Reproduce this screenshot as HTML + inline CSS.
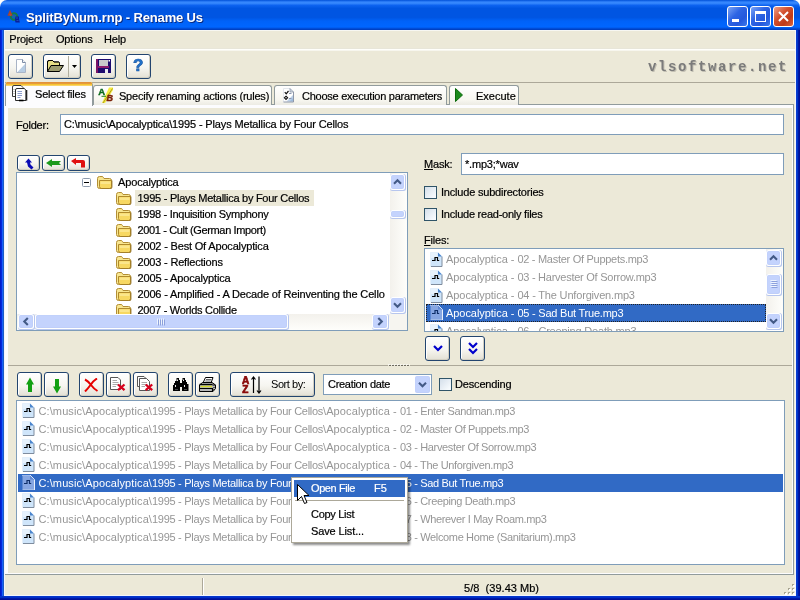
<!DOCTYPE html>
<html><head><meta charset="utf-8">
<style>
*{box-sizing:border-box;margin:0;padding:0}
html,body{width:800px;height:600px;overflow:hidden;background:#ECE9D8}
body{font-family:"Liberation Sans",sans-serif;font-size:11px;color:#000;position:relative;letter-spacing:-0.2px;will-change:transform}
.abs,.abs>div,.abs>span,.abs>svg{position:absolute}
#title{left:0;top:0;width:800px;height:30px;background:linear-gradient(to bottom,#0050D8 0%,#2F80FA 6%,#3A8CFF 10%,#0C62F0 18%,#0055E2 28%,#0055E2 58%,#0062F8 70%,#0066FF 90%,#0048D0 96%,#003AB8 100%);border-radius:7px 7px 0 0}
#title .t{left:26px;top:10px;color:#fff;font-weight:bold;font-size:13px;letter-spacing:-0.14px;text-shadow:1px 1px 0 #0A2A80;white-space:nowrap}
#bl{left:0;top:30px;width:4px;height:570px;background:linear-gradient(to right,#001CCB 0,#001CCB 1px,#0428DC 1px,#0428DC 2px,#1660F8 2px,#1660F8 3px,#1C5AC4 3px)}
#br{left:796px;top:30px;width:4px;height:570px;background:linear-gradient(to right,#0A3CD0 0,#0A3CD0 1px,#0038C8 1px,#0038C8 2px,#0018A8 2px,#0018A8 3px,#001098 3px)}
#bb{left:0;top:596px;width:800px;height:4px;background:linear-gradient(to bottom,#0A3CD0 0,#0030C8 1px,#0030C8 2px,#0018A8 2px,#0018A8 3px,#001098 3px)}
.wb{top:6px;width:21px;height:21px;border:1px solid #fff;border-radius:3px;background:linear-gradient(135deg,#7BA4F5 0%,#2E65E4 40%,#2458DC 70%,#3A78EC 100%)}
.wb.c{background:linear-gradient(135deg,#EDA088 0%,#D3502E 40%,#C03A18 70%,#D8663E 100%)}
#menu span{top:33px;font-size:11px;-webkit-text-stroke:0.2px}
.hl{height:1px;left:4px;width:792px}
.tb{border:1px solid #23456F;border-radius:3px;background:linear-gradient(to bottom,#FFFFFF 0%,#F6F5F0 55%,#E3E0D4 100%);box-shadow:inset -1px -1px 0 #D2CFC2, inset 1px 1px 0 #fff}
.tab{top:85px;height:20px;border:1px solid #919B9C;border-bottom:none;border-radius:3px 3px 0 0;background:linear-gradient(to bottom,#FFFFFF,#F7F6EF 75%,#ECEBE3);font-size:11px;white-space:nowrap}
.tab span{top:4px;-webkit-text-stroke:0.2px}
.inp{background:#fff;border:1px solid #7F9DB9;font-size:11px;white-space:nowrap;overflow:hidden;-webkit-text-stroke:0.2px}
.cb{width:13px;height:13px;border:1px solid #2F5468;background:linear-gradient(135deg,#D4DFEA,#F6FAFD 85%)}
.lbl{font-size:11px;white-space:nowrap;-webkit-text-stroke:0.2px}
.sbt{background:linear-gradient(to right,#F3F1EC,#FEFEFB)}
.sbt.h{background:linear-gradient(to bottom,#F3F1EC,#FEFEFB)}
.row{left:0;height:18px;white-space:nowrap;font-size:11px;color:#969696;line-height:18px;-webkit-text-stroke:0}
.row.t{color:#000;line-height:16px;height:16px;-webkit-text-stroke:0.2px}
.sel{background:#316AC5;color:#fff}
</style></head><body>

<!-- window frame -->
<div class="abs" style="left:0;top:0;width:800px;height:10px;background:#fff"></div>
<div id="title" class="abs"><div class="t">SplitByNum.rnp - Rename Us</div>
 <svg style="left:7px;top:9px" width="14" height="15" viewBox="0 0 14 15"><circle cx="7" cy="7.5" r="3.3" fill="none" stroke="#167A44" stroke-width="1.9"/><circle cx="7" cy="7.5" r="1.6" fill="#1E6A94"/><path d="M3 0.8L5.8 6.8H0.4Z" fill="#A8442A"/><path d="M2 4.5L4.5 6L3 7Z" fill="#B84848"/><path d="M8.5 7.5H12V10L12.8 13.5H8.5Q7.5 11 8.5 7.5Z" fill="#08209C"/><path d="M9 9H11M9.5 11.5H11.5" stroke="#1E50C0" stroke-width="0.9"/></svg>
 <div class="wb" style="left:727px"><div style="left:4px;top:12px;width:7px;height:3px;background:#fff;position:absolute"></div></div>
 <div class="wb" style="left:750px"><div style="left:4px;top:4px;width:11px;height:11px;border:1px solid #fff;border-top-width:3px;position:absolute"></div></div>
 <div class="wb c" style="left:773px"><svg style="left:4px;top:4px;position:absolute" width="11" height="11" viewBox="0 0 11 11"><path d="M1 1L10 10M10 1L1 10" stroke="#fff" stroke-width="2"/></svg></div>
</div>
<div class="abs" style="left:4px;top:30px;width:792px;height:1px;background:#F7F7F2"></div>
<div id="bl" class="abs"></div><div id="br" class="abs"></div><div id="bb" class="abs"></div>

<!-- menu -->
<div id="menu" class="abs"><span style="left:9.3px">Project</span><span style="left:56px">Options</span><span style="left:104px">Help</span></div>
<div class="abs hl" style="top:48px;background:#E8E6D9"></div><div class="abs hl" style="top:49px;background:#FFFFFB"></div><div class="abs hl" style="top:50px;background:#F7F6EE"></div>

<!-- toolbar -->
<div class="abs tb" style="left:8px;top:54px;width:25px;height:25px">
 <svg style="left:7px;top:4px" width="11" height="15" viewBox="0 0 11 15"><path d="M0.5 0.5H6.5L9.5 3.5V13.5H0.5Z" fill="#fff" stroke="#A9B4C6"/><path d="M9 5V13H1.5Z" fill="#B7CDE4"/><path d="M6.5 0.5V3.5H9.5" fill="#F2F5FA" stroke="#7D8CA6"/></svg>
</div>
<div class="abs tb" style="left:43px;top:54px;width:38px;height:25px">
 <div style="left:24px;top:1px;width:1px;height:21px;background:#B0AE9F"></div>
 <svg style="left:3px;top:5px" width="17" height="13" viewBox="0 0 17 13"><path d="M0.5 11.5V2Q0.5 0.5 2 0.5H5.5L7 2H11.5Q12.5 2 12.5 3.5V5" fill="#E6DE86" stroke="#000"/><path d="M0.5 11.5V1.5H6L7 2.5H12.5V6H4Z" fill="#E6DE86"/><path d="M0.5 11.5L4 5.5H16.5L12.5 11.5Z" fill="#9C9C70" stroke="#000"/><path d="M0.5 11.5V2Q0.5 0.5 2 0.5H5.5L7 2H11.5Q12.5 2 12.5 3.5V5.5" fill="none" stroke="#000"/></svg>
 <svg style="left:28px;top:10px" width="5" height="3" viewBox="0 0 5 3"><path d="M0 0H5L2.5 3Z" fill="#000"/></svg>
</div>
<div class="abs tb" style="left:91px;top:54px;width:25px;height:25px">
 <svg style="left:4px;top:4px" width="15" height="14" viewBox="0 0 15 14"><rect x="0" y="0" width="15" height="14" fill="#1C0A6E"/><rect x="0" y="0" width="2" height="14" fill="#7A1468"/><rect x="2" y="7" width="11" height="2" fill="#8A1A6E"/><rect x="3" y="1" width="9" height="6" fill="#C8C8CC"/><rect x="9" y="10" width="3" height="4" fill="#E8E8F0"/><rect x="12.5" y="1" width="1.5" height="1.5" fill="#fff"/></svg>
</div>
<div class="abs tb" style="left:126px;top:54px;width:25px;height:25px">
 <div style="left:6px;top:1px;font-weight:bold;font-size:17px;color:#2373CC;letter-spacing:0;-webkit-text-stroke:0.7px #1B5BA8">?</div>
</div>
<div class="abs" style="left:648px;top:59px;font-family:'Liberation Mono',monospace;font-weight:bold;font-size:14px;color:#7B7B7B;text-shadow:1px 1px 0 #C2BFB2;letter-spacing:1.6px">vlsoftware.net</div>
<div class="abs hl" style="top:82px;background:#ACA899"></div>

<!-- tab control -->
<div class="abs" style="left:4px;top:104px;width:790px;height:471px;border:1px solid #919B9C;background:#FCFCFE"></div>
<div class="abs" style="left:8px;top:108px;width:784px;height:257px;background:#ECE9D8"></div>
<div class="abs" style="left:8px;top:365px;width:784px;height:1px;background:#ACA899"></div>
<div class="abs" style="left:8px;top:366px;width:784px;height:207px;background:#ECE9D8"></div>
<div class="abs tab" style="left:93px;width:179px"><span style="left:25px;letter-spacing:-0.22px">Specify renaming actions (rules)</span>
 <svg style="left:4px;top:0px" width="16" height="18" viewBox="0 0 16 18"><path d="M11 1.5H15V4L7 17H4Z" fill="#F6EA2A" opacity="0.9"/><path d="M14.5 2.5L5 17" stroke="#8A7A10" stroke-width="0.7"/><text x="0.3" y="8.7" font-family="Liberation Sans" font-weight="bold" font-size="9.5" fill="#0C6A1C" stroke="#0C6A1C" stroke-width="0.4">A</text><path d="M3.5 10.3H8" stroke="#2A8A1A" stroke-width="1"/><text x="8.6" y="14.6" font-family="Liberation Sans" font-weight="bold" font-style="italic" font-size="9" fill="#7A2008" stroke="#7A2008" stroke-width="0.4">B</text></svg>
</div>
<div class="abs tab" style="left:274px;width:173px"><span style="left:27px;letter-spacing:-0.25px">Choose execution parameters</span>
 <svg style="left:8px;top:2px" width="11" height="15" viewBox="0 0 11 15"><path d="M0.5 0.5H7L10.5 4V14H0.5Z" fill="#fff"/><path d="M10 7V13.5H3.5Z" fill="#BBD0E8"/><path d="M10 10V13.5H6.5Z" fill="#9DBBDD"/><path d="M0.5 14V0.5H7" fill="none" stroke="#E4E8EE"/><path d="M10.5 4V14H0.5" fill="none" stroke="#8E97A8"/><path d="M7 0.5L10.5 4H7Z" fill="#D5DCE6" stroke="#8E97A8" stroke-width="0.8"/><path d="M1.8 4.2L3.2 5.8L5.5 3" fill="none" stroke="#111" stroke-width="1.2"/><path d="M3 8.2L4.6 9.8L3 11.4L1.4 9.8Z" fill="none" stroke="#111" stroke-width="1.1"/><path d="M6 5.5H8.5M5.8 10.5H8.5" stroke="#8A96B0"/></svg>
</div>
<div class="abs tab" style="left:449px;width:70px"><span style="left:26px;letter-spacing:0">Execute</span>
 <svg style="left:5px;top:2px" width="8" height="14" viewBox="0 0 8 14"><path d="M0.5 0.5L7.5 7L0.5 13.5Z" fill="#1C8A1C" stroke="#0C6A0C"/></svg>
</div>
<div class="abs tab" style="left:5px;top:82px;width:88px;height:24px;border-top:3px solid #FFC73C;background:#FCFCFE"><div style="left:1px;right:1px;top:-3px;height:1px;background:#E2923A"></div><div style="left:0;right:0;top:-2px;height:1px;background:#E59A3C"></div><div style="left:0;right:0;top:-1px;height:1px;background:#F6C432"></div><div style="left:0;right:0;top:0;height:1px;background:#F9D468"></div><span style="left:29px;top:3px;letter-spacing:-0.2px">Select files</span>
 <svg style="left:6px;top:0px" width="16" height="17" viewBox="0 0 16 17"><path d="M0.5 2Q0.5 0.5 2 0.5H9L11 2.5V11.5H0.5Z" fill="#fff" stroke="#3A3A3A"/><path d="M3.5 5Q3.5 3.5 5 3.5H12.5L14 5.5V15.5H3.5Z" fill="#fff" stroke="#2A2A2A"/><path d="M14.5 5V15.5" stroke="#222" stroke-width="1.6"/><path d="M5.5 6.5H10M5.5 8.5H10M5.5 10.5H10M5.5 12.5H8.5" stroke="#8C9CCC"/><path d="M7 15.5H11.5" stroke="#000" stroke-width="1.6"/><path d="M1.5 4.5H2.5M1.5 6.5H2.5M1.5 8.5H2.5" stroke="#999"/></svg>
</div>

<!-- folder -->
<div class="abs lbl" style="left:16px;top:119px">F<u>o</u>lder:</div>
<div class="abs inp" style="left:60px;top:114px;width:724px;height:21px;padding:3px 0 0 3px;letter-spacing:-0.144px">C:\music\Apocalyptica\1995 - Plays Metallica by Four Cellos</div>

<!-- nav buttons -->
<div class="abs tb" style="left:17px;top:155px;width:23px;height:16px">
 <svg style="left:7px;top:2px" width="9" height="12" viewBox="0 0 9 12"><path d="M3.5 0.5L7 4.5H5L5.5 6.5L8.5 9.5L6.5 11.5L3 8.5L2 4.5H0Z" fill="#0A0AB4"/></svg>
</div>
<div class="abs tb" style="left:42px;top:155px;width:23px;height:16px">
 <svg style="left:3px;top:3px" width="16" height="8" viewBox="0 0 16 8"><path d="M0 4L6 0V2H15L13 4L15 6H6V8Z" fill="#1C9A1C"/></svg>
</div>
<div class="abs tb" style="left:67px;top:155px;width:23px;height:16px">
 <svg style="left:3px;top:2px" width="15" height="10" viewBox="0 0 15 10"><path d="M0 3L5 0V2H12Q14 2 14 4V9.5H10V5H5V7Z" fill="#E01010"/></svg>
</div>

<!-- tree -->
<div class="abs inp" id="tree" style="left:16px;top:172px;width:392px;height:159px">
<div style="left:118px;top:17px;width:179px;height:16px;background:#ECE9D8"></div>
<svg style="left:65px;top:5px" width="9" height="9" viewBox="0 0 9 9"><rect x="0.5" y="0.5" width="8" height="8" rx="1" fill="#fff" stroke="#8E9BAD"/><path d="M2 4.5H7" stroke="#000"/></svg>
<svg style="left:80px;top:3px" width="16" height="13" viewBox="0 0 16 13"><path d="M0.5 2.5Q0.5 0.5 2.5 0.5H5Q6 0.5 6.5 1.5L7 2.5H12.5Q14.5 2.5 14.5 4.5V10.5Q14.5 12.5 12.5 12.5H2.5Q0.5 12.5 0.5 10.5Z" fill="#F8E690" stroke="#B38E34"/><path d="M2.5 4.5H14.5V10.5Q14.5 12.5 12.5 12.5H4.5Q2.5 12.5 2.5 10.5Z" fill="#F7D862" stroke="#B08A2C"/><path d="M3.5 5.5H13.5V8H3.5Z" fill="#FBE68C"/><path d="M15 4.5V11Q15 13 13 13H4" fill="none" stroke="#8F7024" stroke-width="0.8"/></svg>
<div class="row t" style="left:101px;top:1px;letter-spacing:-0.148px">Apocalyptica</div>
<svg style="left:99px;top:19px" width="16" height="13" viewBox="0 0 16 13"><path d="M0.5 2.5Q0.5 0.5 2.5 0.5H5Q6 0.5 6.5 1.5L7 2.5H12.5Q14.5 2.5 14.5 4.5V10.5Q14.5 12.5 12.5 12.5H2.5Q0.5 12.5 0.5 10.5Z" fill="#F8E690" stroke="#B38E34"/><path d="M2.5 4.5H14.5V10.5Q14.5 12.5 12.5 12.5H4.5Q2.5 12.5 2.5 10.5Z" fill="#F7D862" stroke="#B08A2C"/><path d="M3.5 5.5H13.5V8H3.5Z" fill="#FBE68C"/><path d="M15 4.5V11Q15 13 13 13H4" fill="none" stroke="#8F7024" stroke-width="0.8"/></svg>
<div class="row t" style="left:120.5px;top:17px;letter-spacing:-0.266px">1995 - Plays Metallica by Four Cellos</div>
<svg style="left:99px;top:35px" width="16" height="13" viewBox="0 0 16 13"><path d="M0.5 2.5Q0.5 0.5 2.5 0.5H5Q6 0.5 6.5 1.5L7 2.5H12.5Q14.5 2.5 14.5 4.5V10.5Q14.5 12.5 12.5 12.5H2.5Q0.5 12.5 0.5 10.5Z" fill="#F8E690" stroke="#B38E34"/><path d="M2.5 4.5H14.5V10.5Q14.5 12.5 12.5 12.5H4.5Q2.5 12.5 2.5 10.5Z" fill="#F7D862" stroke="#B08A2C"/><path d="M3.5 5.5H13.5V8H3.5Z" fill="#FBE68C"/><path d="M15 4.5V11Q15 13 13 13H4" fill="none" stroke="#8F7024" stroke-width="0.8"/></svg>
<div class="row t" style="left:120.5px;top:33px;letter-spacing:-0.291px">1998 - Inquisition Symphony</div>
<svg style="left:99px;top:51px" width="16" height="13" viewBox="0 0 16 13"><path d="M0.5 2.5Q0.5 0.5 2.5 0.5H5Q6 0.5 6.5 1.5L7 2.5H12.5Q14.5 2.5 14.5 4.5V10.5Q14.5 12.5 12.5 12.5H2.5Q0.5 12.5 0.5 10.5Z" fill="#F8E690" stroke="#B38E34"/><path d="M2.5 4.5H14.5V10.5Q14.5 12.5 12.5 12.5H4.5Q2.5 12.5 2.5 10.5Z" fill="#F7D862" stroke="#B08A2C"/><path d="M3.5 5.5H13.5V8H3.5Z" fill="#FBE68C"/><path d="M15 4.5V11Q15 13 13 13H4" fill="none" stroke="#8F7024" stroke-width="0.8"/></svg>
<div class="row t" style="left:120.5px;top:49px;letter-spacing:-0.362px">2001 - Cult (German Import)</div>
<svg style="left:99px;top:67px" width="16" height="13" viewBox="0 0 16 13"><path d="M0.5 2.5Q0.5 0.5 2.5 0.5H5Q6 0.5 6.5 1.5L7 2.5H12.5Q14.5 2.5 14.5 4.5V10.5Q14.5 12.5 12.5 12.5H2.5Q0.5 12.5 0.5 10.5Z" fill="#F8E690" stroke="#B38E34"/><path d="M2.5 4.5H14.5V10.5Q14.5 12.5 12.5 12.5H4.5Q2.5 12.5 2.5 10.5Z" fill="#F7D862" stroke="#B08A2C"/><path d="M3.5 5.5H13.5V8H3.5Z" fill="#FBE68C"/><path d="M15 4.5V11Q15 13 13 13H4" fill="none" stroke="#8F7024" stroke-width="0.8"/></svg>
<div class="row t" style="left:120.5px;top:65px;letter-spacing:-0.173px">2002 - Best Of Apocalyptica</div>
<svg style="left:99px;top:83px" width="16" height="13" viewBox="0 0 16 13"><path d="M0.5 2.5Q0.5 0.5 2.5 0.5H5Q6 0.5 6.5 1.5L7 2.5H12.5Q14.5 2.5 14.5 4.5V10.5Q14.5 12.5 12.5 12.5H2.5Q0.5 12.5 0.5 10.5Z" fill="#F8E690" stroke="#B38E34"/><path d="M2.5 4.5H14.5V10.5Q14.5 12.5 12.5 12.5H4.5Q2.5 12.5 2.5 10.5Z" fill="#F7D862" stroke="#B08A2C"/><path d="M3.5 5.5H13.5V8H3.5Z" fill="#FBE68C"/><path d="M15 4.5V11Q15 13 13 13H4" fill="none" stroke="#8F7024" stroke-width="0.8"/></svg>
<div class="row t" style="left:120.5px;top:81px;letter-spacing:-0.187px">2003 - Reflections</div>
<svg style="left:99px;top:99px" width="16" height="13" viewBox="0 0 16 13"><path d="M0.5 2.5Q0.5 0.5 2.5 0.5H5Q6 0.5 6.5 1.5L7 2.5H12.5Q14.5 2.5 14.5 4.5V10.5Q14.5 12.5 12.5 12.5H2.5Q0.5 12.5 0.5 10.5Z" fill="#F8E690" stroke="#B38E34"/><path d="M2.5 4.5H14.5V10.5Q14.5 12.5 12.5 12.5H4.5Q2.5 12.5 2.5 10.5Z" fill="#F7D862" stroke="#B08A2C"/><path d="M3.5 5.5H13.5V8H3.5Z" fill="#FBE68C"/><path d="M15 4.5V11Q15 13 13 13H4" fill="none" stroke="#8F7024" stroke-width="0.8"/></svg>
<div class="row t" style="left:120.5px;top:97px;letter-spacing:-0.154px">2005 - Apocalyptica</div>
<svg style="left:99px;top:115px" width="16" height="13" viewBox="0 0 16 13"><path d="M0.5 2.5Q0.5 0.5 2.5 0.5H5Q6 0.5 6.5 1.5L7 2.5H12.5Q14.5 2.5 14.5 4.5V10.5Q14.5 12.5 12.5 12.5H2.5Q0.5 12.5 0.5 10.5Z" fill="#F8E690" stroke="#B38E34"/><path d="M2.5 4.5H14.5V10.5Q14.5 12.5 12.5 12.5H4.5Q2.5 12.5 2.5 10.5Z" fill="#F7D862" stroke="#B08A2C"/><path d="M3.5 5.5H13.5V8H3.5Z" fill="#FBE68C"/><path d="M15 4.5V11Q15 13 13 13H4" fill="none" stroke="#8F7024" stroke-width="0.8"/></svg>
<div class="row t" style="left:120.5px;top:113px;letter-spacing:-0.163px">2006 - Amplified - A Decade of Reinventing the Cello</div>
<svg style="left:99px;top:131px" width="16" height="13" viewBox="0 0 16 13"><path d="M0.5 2.5Q0.5 0.5 2.5 0.5H5Q6 0.5 6.5 1.5L7 2.5H12.5Q14.5 2.5 14.5 4.5V10.5Q14.5 12.5 12.5 12.5H2.5Q0.5 12.5 0.5 10.5Z" fill="#F8E690" stroke="#B38E34"/><path d="M2.5 4.5H14.5V10.5Q14.5 12.5 12.5 12.5H4.5Q2.5 12.5 2.5 10.5Z" fill="#F7D862" stroke="#B08A2C"/><path d="M3.5 5.5H13.5V8H3.5Z" fill="#FBE68C"/><path d="M15 4.5V11Q15 13 13 13H4" fill="none" stroke="#8F7024" stroke-width="0.8"/></svg>
<div class="row t" style="left:120.5px;top:129px;letter-spacing:-0.273px">2007 - Worlds Collide</div>
<div class="sbt" style="left:373px;top:0;width:17px;height:141px"></div>
<div class="sbt h" style="left:0;top:141px;width:373px;height:16px"></div>
<div style="left:373px;top:141px;width:17px;height:16px;background:#F6F5F0"></div>
<svg style="left:373px;top:1px" width="16" height="17" viewBox="0 0 16 17"><rect x="0" y="0" width="16" height="17" rx="2.5" fill="#B7C6EE"/><rect x="0" y="0" width="15" height="16" rx="2.5" fill="#fff"/><rect x="1" y="1" width="13" height="14" rx="2" fill="#C0CFFA"/><rect x="1.5" y="1.5" width="11.5" height="12.5" rx="1.5" fill="#C4D3FD"/><g transform="translate(7.5,8.0)"><path d="M-3.5 1.8L0 -1.7L3.5 1.8" fill="none" stroke="#435A86" stroke-width="2.1"/></g></svg>
<svg style="left:373px;top:124px" width="16" height="17" viewBox="0 0 16 17"><rect x="0" y="0" width="16" height="17" rx="2.5" fill="#B7C6EE"/><rect x="0" y="0" width="15" height="16" rx="2.5" fill="#fff"/><rect x="1" y="1" width="13" height="14" rx="2" fill="#C0CFFA"/><rect x="1.5" y="1.5" width="11.5" height="12.5" rx="1.5" fill="#C4D3FD"/><g transform="translate(7.5,8.0)"><path d="M-3.5 -1.7L0 1.8L3.5 -1.7" fill="none" stroke="#435A86" stroke-width="2.1"/></g></svg>
<svg style="left:373px;top:37px" width="16" height="9" viewBox="0 0 16 9"><rect x="0" y="0" width="16" height="9" rx="2.5" fill="#B7C6EE"/><rect x="0" y="0" width="15" height="8" rx="2.5" fill="#fff"/><rect x="1" y="1" width="13" height="6" rx="2" fill="#BFCEF9"/><rect x="1.5" y="1.5" width="11.5" height="4.5" rx="1.5" fill="#C4D3FD"/></svg>
<svg style="left:1px;top:141px" width="17" height="16" viewBox="0 0 17 16"><rect x="0" y="0" width="17" height="16" rx="2.5" fill="#B7C6EE"/><rect x="0" y="0" width="16" height="15" rx="2.5" fill="#fff"/><rect x="1" y="1" width="14" height="13" rx="2" fill="#C0CFFA"/><rect x="1.5" y="1.5" width="12.5" height="11.5" rx="1.5" fill="#C4D3FD"/><g transform="translate(8.0,7.5)"><path d="M1.8 -3.5L-1.7 0L1.8 3.5" fill="none" stroke="#435A86" stroke-width="2.1"/></g></svg>
<svg style="left:355px;top:141px" width="17" height="16" viewBox="0 0 17 16"><rect x="0" y="0" width="17" height="16" rx="2.5" fill="#B7C6EE"/><rect x="0" y="0" width="16" height="15" rx="2.5" fill="#fff"/><rect x="1" y="1" width="14" height="13" rx="2" fill="#C0CFFA"/><rect x="1.5" y="1.5" width="12.5" height="11.5" rx="1.5" fill="#C4D3FD"/><g transform="translate(8.0,7.5)"><path d="M-1.7 -3.5L1.8 0L-1.7 3.5" fill="none" stroke="#435A86" stroke-width="2.1"/></g></svg>
<svg style="left:18px;top:141px" width="254" height="16" viewBox="0 0 254 16"><rect x="0" y="0" width="254" height="16" rx="2.5" fill="#B7C6EE"/><rect x="0" y="0" width="253" height="15" rx="2.5" fill="#fff"/><rect x="1" y="1" width="251" height="13" rx="2" fill="#BFCEF9"/><rect x="1.5" y="1.5" width="249.5" height="11.5" rx="1.5" fill="#C4D3FD"/><path d="M122.5 4.5V10.5" stroke="#EEF4FE"/><path d="M123.5 5.5V11.5" stroke="#8CA0DC"/><path d="M124.5 4.5V10.5" stroke="#EEF4FE"/><path d="M125.5 5.5V11.5" stroke="#8CA0DC"/><path d="M126.5 4.5V10.5" stroke="#EEF4FE"/><path d="M127.5 5.5V11.5" stroke="#8CA0DC"/><path d="M128.5 4.5V10.5" stroke="#EEF4FE"/><path d="M129.5 5.5V11.5" stroke="#8CA0DC"/></svg>
</div>

<!-- mask -->
<div class="abs lbl" style="left:424px;top:158px"><u>M</u>ask:</div>
<div class="abs inp" style="left:461px;top:153px;width:323px;height:22px;padding:4px 0 0 3px">*.mp3;*wav</div>
<div class="abs cb" style="left:424px;top:186px"></div>
<div class="abs lbl" style="left:441px;top:186px;letter-spacing:-0.2px">Include subdirectories</div>
<div class="abs cb" style="left:424px;top:208px"></div>
<div class="abs lbl" style="left:441px;top:208px;letter-spacing:-0.24px">Include read-only files</div>
<div class="abs lbl" style="left:424px;top:234px"><u>F</u>iles:</div>

<!-- file list -->
<div class="abs inp" id="files" style="left:424px;top:248px;width:360px;height:84px">
<svg style="left:5px;top:3px" width="13" height="15" viewBox="0 0 13 15"><path d="M0.5 0.5H8L12 4.5V14.5H0.5Z" fill="#CFE5FA"/><path d="M1 1H7.5V6H1Z" fill="#E6F2FD"/><path d="M0.5 14.5V0.5H8" fill="none" stroke="#E3EFFB"/><path d="M12 4.5V14.5H1" fill="none" stroke="#7E8C9E"/><path d="M8 0.5L12 4.5H8Z" fill="#4A84CC"/><path d="M2 8.5H5V5.5H7.5V8.5H9.2" fill="none" stroke="#000" stroke-width="1.2"/></svg>
<div class="row" style="left:21px;top:1px;letter-spacing:-0.05px">Apocalyptica - </div><div class="row" style="left:92.4px;top:1px;letter-spacing:-0.283px">02 - Master Of Puppets.mp3</div>
<svg style="left:5px;top:21px" width="13" height="15" viewBox="0 0 13 15"><path d="M0.5 0.5H8L12 4.5V14.5H0.5Z" fill="#CFE5FA"/><path d="M1 1H7.5V6H1Z" fill="#E6F2FD"/><path d="M0.5 14.5V0.5H8" fill="none" stroke="#E3EFFB"/><path d="M12 4.5V14.5H1" fill="none" stroke="#7E8C9E"/><path d="M8 0.5L12 4.5H8Z" fill="#4A84CC"/><path d="M2 8.5H5V5.5H7.5V8.5H9.2" fill="none" stroke="#000" stroke-width="1.2"/></svg>
<div class="row" style="left:21px;top:19px;letter-spacing:-0.05px">Apocalyptica - </div><div class="row" style="left:92.4px;top:19px;letter-spacing:-0.256px">03 - Harvester Of Sorrow.mp3</div>
<svg style="left:5px;top:39px" width="13" height="15" viewBox="0 0 13 15"><path d="M0.5 0.5H8L12 4.5V14.5H0.5Z" fill="#CFE5FA"/><path d="M1 1H7.5V6H1Z" fill="#E6F2FD"/><path d="M0.5 14.5V0.5H8" fill="none" stroke="#E3EFFB"/><path d="M12 4.5V14.5H1" fill="none" stroke="#7E8C9E"/><path d="M8 0.5L12 4.5H8Z" fill="#4A84CC"/><path d="M2 8.5H5V5.5H7.5V8.5H9.2" fill="none" stroke="#000" stroke-width="1.2"/></svg>
<div class="row" style="left:21px;top:37px;letter-spacing:-0.05px">Apocalyptica - </div><div class="row" style="left:92.4px;top:37px;letter-spacing:-0.177px">04 - The Unforgiven.mp3</div>
<div class="sel" style="left:1px;top:55px;width:340px;height:18px;outline:1px dotted #222;outline-offset:-1px"></div>
<svg style="left:5px;top:56px" width="13" height="15" viewBox="0 0 13 15"><path d="M0.5 0.5H8L12 4.5V14.5H0.5Z" fill="#86A6E2"/><path d="M0 0.5H8" stroke="#9DB8EA"/><path d="M8 0L12.5 4.5V15H0.5" fill="none" stroke="#E9F0FC"/><path d="M8 0.5V4.5H12" fill="#5F88D4"/><path d="M2 8.5H5V5.5H7.5V8.5H9.2" fill="none" stroke="#0F2F68" stroke-width="1.2"/></svg>
<div class="row" style="left:21px;top:55px;letter-spacing:-0.05px;color:#fff">Apocalyptica - </div><div class="row" style="left:92.4px;top:55px;letter-spacing:-0.224px;color:#fff">05 - Sad But True.mp3</div>
<svg style="left:5px;top:75px" width="13" height="15" viewBox="0 0 13 15"><path d="M0.5 0.5H8L12 4.5V14.5H0.5Z" fill="#CFE5FA"/><path d="M1 1H7.5V6H1Z" fill="#E6F2FD"/><path d="M0.5 14.5V0.5H8" fill="none" stroke="#E3EFFB"/><path d="M12 4.5V14.5H1" fill="none" stroke="#7E8C9E"/><path d="M8 0.5L12 4.5H8Z" fill="#4A84CC"/><path d="M2 8.5H5V5.5H7.5V8.5H9.2" fill="none" stroke="#000" stroke-width="1.2"/></svg>
<div class="row" style="left:21px;top:73px;letter-spacing:-0.05px">Apocalyptica - </div><div class="row" style="left:92.4px;top:73px;letter-spacing:-0.2px">06 - Creeping Death.mp3</div>
<div class="sbt" style="left:341px;top:0;width:17px;height:81px"></div>
<svg style="left:341px;top:1px" width="16" height="17" viewBox="0 0 16 17"><rect x="0" y="0" width="16" height="17" rx="2.5" fill="#B7C6EE"/><rect x="0" y="0" width="15" height="16" rx="2.5" fill="#fff"/><rect x="1" y="1" width="13" height="14" rx="2" fill="#C0CFFA"/><rect x="1.5" y="1.5" width="11.5" height="12.5" rx="1.5" fill="#C4D3FD"/><g transform="translate(7.5,8.0)"><path d="M-3.5 1.8L0 -1.7L3.5 1.8" fill="none" stroke="#435A86" stroke-width="2.1"/></g></svg>
<svg style="left:341px;top:64px" width="16" height="17" viewBox="0 0 16 17"><rect x="0" y="0" width="16" height="17" rx="2.5" fill="#B7C6EE"/><rect x="0" y="0" width="15" height="16" rx="2.5" fill="#fff"/><rect x="1" y="1" width="13" height="14" rx="2" fill="#C0CFFA"/><rect x="1.5" y="1.5" width="11.5" height="12.5" rx="1.5" fill="#C4D3FD"/><g transform="translate(7.5,8.0)"><path d="M-3.5 -1.7L0 1.8L3.5 -1.7" fill="none" stroke="#435A86" stroke-width="2.1"/></g></svg>
<svg style="left:341px;top:25px" width="16" height="22" viewBox="0 0 16 22"><rect x="0" y="0" width="16" height="22" rx="2.5" fill="#B7C6EE"/><rect x="0" y="0" width="15" height="21" rx="2.5" fill="#fff"/><rect x="1" y="1" width="13" height="19" rx="2" fill="#BFCEF9"/><rect x="1.5" y="1.5" width="11.5" height="17.5" rx="1.5" fill="#C4D3FD"/><path d="M4.5 6.5H10.5" stroke="#EEF4FE"/><path d="M5.5 7.5H11.5" stroke="#8CA0DC"/><path d="M4.5 8.5H10.5" stroke="#EEF4FE"/><path d="M5.5 9.5H11.5" stroke="#8CA0DC"/><path d="M4.5 10.5H10.5" stroke="#EEF4FE"/><path d="M5.5 11.5H11.5" stroke="#8CA0DC"/><path d="M4.5 12.5H10.5" stroke="#EEF4FE"/><path d="M5.5 13.5H11.5" stroke="#8CA0DC"/></svg>
</div>
<div class="abs tb" style="left:425px;top:336px;width:25px;height:25px">
 <svg style="left:7px;top:8px" width="10" height="7" viewBox="0 0 10 7"><path d="M1 1L5 5L9 1" fill="none" stroke="#0000CC" stroke-width="2.2"/></svg>
</div>
<div class="abs tb" style="left:460px;top:336px;width:25px;height:25px">
 <svg style="left:7px;top:5px" width="10" height="14" viewBox="0 0 10 14"><path d="M1 1L5 5L9 1M1 7L5 11L9 7" fill="none" stroke="#0000CC" stroke-width="2.2"/></svg>
</div>
<!-- splitter grip -->
<svg class="abs" style="left:388px;top:363px" width="22" height="4" viewBox="0 0 22 4"><path d="M0 1.5H22" stroke="#F7F6EF" stroke-dasharray="2 1"/><path d="M0 2.5H22" stroke="#ECE9D8"/><path d="M1 2.5H22" stroke="#6E6C62" stroke-dasharray="2 1"/></svg>

<!-- bottom toolbar -->
<div class="abs tb" style="left:17px;top:372px;width:25px;height:25px">
 <svg style="left:8px;top:4px" width="8" height="16" viewBox="0 0 8 16"><path d="M4 0.5L8 7.5H6V15H2V7.5H0Z" fill="#12A012"/></svg>
</div>
<div class="abs tb" style="left:44px;top:372px;width:25px;height:25px">
 <svg style="left:8px;top:5px" width="8" height="16" viewBox="0 0 8 16"><path d="M4 15.5L8 8.5H6V1H2V8.5H0Z" fill="#12A012"/></svg>
</div>
<div class="abs tb" style="left:79px;top:372px;width:25px;height:25px">
 <svg style="left:4px;top:5px" width="15" height="14" viewBox="0 0 15 14"><path d="M1 1.5Q4 3 7 7Q10 11 13.5 13M13 0.5Q9 3 6.5 7Q4 10.5 1 13.5" fill="none" stroke="#E60000" stroke-width="2"/></svg>
</div>
<div class="abs tb" style="left:106px;top:372px;width:25px;height:25px">
 <svg style="left:3px;top:4px" width="17" height="16" viewBox="0 0 17 16"><path d="M0.5 0.5H8L10.5 3V12.5H0.5Z" fill="#fff" stroke="#555"/><path d="M2.5 3.5H7M2.5 5.5H8.5M2.5 7.5H8.5M2.5 9.5H6" stroke="#AAA"/><path d="M8 7.5L14.5 13.2M14.5 7.5L8 13.2" stroke="#D6001C" stroke-width="2.3"/></svg>
</div>
<div class="abs tb" style="left:133px;top:372px;width:25px;height:25px">
 <svg style="left:3px;top:3px" width="17" height="17" viewBox="0 0 17 17"><path d="M0.5 0.5H7L9.5 3V10.5H0.5Z" fill="#fff" stroke="#555"/><path d="M2.5 2.5H9.5L12.5 5.5V14.5H2.5Z" fill="#fff" stroke="#555"/><path d="M4.5 6.5H10M4.5 8.5H10.5M4.5 10.5H8" stroke="#AAA"/><path d="M8.7 8.5L15.2 14.2M15.2 8.5L8.7 14.2" stroke="#D6001C" stroke-width="2.3"/></svg>
</div>
<div class="abs tb" style="left:168px;top:372px;width:25px;height:25px">
 <svg style="left:4px;top:5px" width="16" height="13" viewBox="0 0 16 13"><path d="M3.5 0H6V2H7V5H9V2H9.5V0H12V2H13V4H14V6H15.5V13H9V9H7V13H0V7H1V5H2V3H3.5Z" fill="#000"/><path d="M4.5 1.5V3M10.5 1.5V3M2.5 7V9M11.5 7V9" stroke="#fff" stroke-width="0.9"/><path d="M2 11.5H5M11 11.5H14" stroke="#555" stroke-width="0.8"/></svg>
</div>
<div class="abs tb" style="left:195px;top:372px;width:25px;height:25px">
 <svg style="left:3px;top:4px" width="17" height="15" viewBox="0 0 17 15"><path d="M4 6L6.5 0.5H14L12 6" fill="#fff" stroke="#000"/><path d="M7 2.5H12.5M6.3 4H11.8" stroke="#666"/><path d="M0.5 8L3.5 5.5H13L16.5 8V11.5L14 14.5H0.5Z" fill="#B8B8B8" stroke="#000"/><path d="M0.5 7.5H13.5" stroke="#000" stroke-width="1.4"/><path d="M1.5 9.5H13" stroke="#D6DC28" stroke-width="1.4"/><path d="M0.5 11.5H13.5V14.5" fill="none" stroke="#000" stroke-width="1.2"/><path d="M13.5 8L16.5 8M14.5 10.5H15.5M14.5 12.5H15" stroke="#000"/></svg>
</div>
<div class="abs tb" style="left:230px;top:372px;width:85px;height:25px"><span style="left:40px;top:5px;letter-spacing:-0.44px">Sort by:</span>
 <svg style="left:11px;top:3px" width="20" height="18" viewBox="0 0 20 18"><text x="0" y="7.6" font-family="Liberation Sans" font-weight="bold" font-size="10" fill="#8A0A0A" stroke="#8A0A0A" stroke-width="0.7">A</text><text x="0.3" y="17.4" font-family="Liberation Sans" font-weight="bold" font-size="10" fill="#8A0A0A" stroke="#8A0A0A" stroke-width="0.7">Z</text><path d="M11.5 1V17M9.5 3.5L11.5 1L13.5 3.5" fill="none" stroke="#000" stroke-width="1.2"/><path d="M17 0.5V17M15 14.5L17 17L19 14.5" fill="none" stroke="#000" stroke-width="1.2"/></svg>
</div>
<div class="abs inp" style="left:323px;top:374px;width:109px;height:21px;padding:3px 0 0 4px;letter-spacing:-0.3px">Creation date</div>
<svg class="abs" style="left:414px;top:375px" width="18" height="20" viewBox="0 0 18 20"><rect x="1" y="1" width="15" height="17" rx="2" fill="#C0CFFA"/><rect x="1.5" y="1.5" width="13.5" height="15.5" rx="1.5" fill="#C4D3FD"/><g transform="translate(8.5,9.5)"><path d="M-3.5 -1.7L0 1.8L3.5 -1.7" fill="none" stroke="#435A86" stroke-width="2.1"/></g></svg>
<div class="abs cb" style="left:439px;top:378px"></div>
<div class="abs lbl" style="left:455px;top:378px;letter-spacing:-0.17px">Descending</div>

<!-- main list -->
<div class="abs inp" id="list" style="left:16px;top:400px;width:769px;height:165px">
<svg style="left:5px;top:2px" width="13" height="15" viewBox="0 0 13 15"><path d="M0.5 0.5H8L12 4.5V14.5H0.5Z" fill="#CFE5FA"/><path d="M1 1H7.5V6H1Z" fill="#E6F2FD"/><path d="M0.5 14.5V0.5H8" fill="none" stroke="#E3EFFB"/><path d="M12 4.5V14.5H1" fill="none" stroke="#7E8C9E"/><path d="M8 0.5L12 4.5H8Z" fill="#4A84CC"/><path d="M2 8.5H5V5.5H7.5V8.5H9.2" fill="none" stroke="#000" stroke-width="1.2"/></svg>
<div class="row" style="left:21.5px;top:1px;letter-spacing:0.102px">C:\music\Apocalyptica\</div><div class="row" style="left:135px;top:1px;letter-spacing:-0.286px">1995 - Plays Metallica by Four Cellos</div><div class="row" style="left:306px;top:1px;letter-spacing:0.112px">\Apocalyptica - </div><div class="row" style="left:383px;top:1px;letter-spacing:-0.354px">01 - Enter Sandman.mp3</div>
<svg style="left:5px;top:20px" width="13" height="15" viewBox="0 0 13 15"><path d="M0.5 0.5H8L12 4.5V14.5H0.5Z" fill="#CFE5FA"/><path d="M1 1H7.5V6H1Z" fill="#E6F2FD"/><path d="M0.5 14.5V0.5H8" fill="none" stroke="#E3EFFB"/><path d="M12 4.5V14.5H1" fill="none" stroke="#7E8C9E"/><path d="M8 0.5L12 4.5H8Z" fill="#4A84CC"/><path d="M2 8.5H5V5.5H7.5V8.5H9.2" fill="none" stroke="#000" stroke-width="1.2"/></svg>
<div class="row" style="left:21.5px;top:19px;letter-spacing:0.102px">C:\music\Apocalyptica\</div><div class="row" style="left:135px;top:19px;letter-spacing:-0.286px">1995 - Plays Metallica by Four Cellos</div><div class="row" style="left:306px;top:19px;letter-spacing:0.112px">\Apocalyptica - </div><div class="row" style="left:383px;top:19px;letter-spacing:-0.354px">02 - Master Of Puppets.mp3</div>
<svg style="left:5px;top:38px" width="13" height="15" viewBox="0 0 13 15"><path d="M0.5 0.5H8L12 4.5V14.5H0.5Z" fill="#CFE5FA"/><path d="M1 1H7.5V6H1Z" fill="#E6F2FD"/><path d="M0.5 14.5V0.5H8" fill="none" stroke="#E3EFFB"/><path d="M12 4.5V14.5H1" fill="none" stroke="#7E8C9E"/><path d="M8 0.5L12 4.5H8Z" fill="#4A84CC"/><path d="M2 8.5H5V5.5H7.5V8.5H9.2" fill="none" stroke="#000" stroke-width="1.2"/></svg>
<div class="row" style="left:21.5px;top:37px;letter-spacing:0.102px">C:\music\Apocalyptica\</div><div class="row" style="left:135px;top:37px;letter-spacing:-0.286px">1995 - Plays Metallica by Four Cellos</div><div class="row" style="left:306px;top:37px;letter-spacing:0.112px">\Apocalyptica - </div><div class="row" style="left:383px;top:37px;letter-spacing:-0.354px">03 - Harvester Of Sorrow.mp3</div>
<svg style="left:5px;top:56px" width="13" height="15" viewBox="0 0 13 15"><path d="M0.5 0.5H8L12 4.5V14.5H0.5Z" fill="#CFE5FA"/><path d="M1 1H7.5V6H1Z" fill="#E6F2FD"/><path d="M0.5 14.5V0.5H8" fill="none" stroke="#E3EFFB"/><path d="M12 4.5V14.5H1" fill="none" stroke="#7E8C9E"/><path d="M8 0.5L12 4.5H8Z" fill="#4A84CC"/><path d="M2 8.5H5V5.5H7.5V8.5H9.2" fill="none" stroke="#000" stroke-width="1.2"/></svg>
<div class="row" style="left:21.5px;top:55px;letter-spacing:0.102px">C:\music\Apocalyptica\</div><div class="row" style="left:135px;top:55px;letter-spacing:-0.286px">1995 - Plays Metallica by Four Cellos</div><div class="row" style="left:306px;top:55px;letter-spacing:0.112px">\Apocalyptica - </div><div class="row" style="left:383px;top:55px;letter-spacing:-0.354px">04 - The Unforgiven.mp3</div>
<div class="sel" style="left:1px;top:73px;width:765px;height:18px"></div>
<svg style="left:5px;top:74px" width="13" height="15" viewBox="0 0 13 15"><path d="M0.5 0.5H8L12 4.5V14.5H0.5Z" fill="#86A6E2"/><path d="M0 0.5H8" stroke="#9DB8EA"/><path d="M8 0L12.5 4.5V15H0.5" fill="none" stroke="#E9F0FC"/><path d="M8 0.5V4.5H12" fill="#5F88D4"/><path d="M2 8.5H5V5.5H7.5V8.5H9.2" fill="none" stroke="#0F2F68" stroke-width="1.2"/></svg>
<div class="row" style="left:21.5px;top:73px;letter-spacing:0.102px;color:#fff">C:\music\Apocalyptica\</div><div class="row" style="left:135px;top:73px;letter-spacing:-0.286px;color:#fff">1995 - Plays Metallica by Four Cellos</div><div class="row" style="left:306px;top:73px;letter-spacing:0.112px;color:#fff">\Apocalyptica - </div><div class="row" style="left:383px;top:73px;letter-spacing:-0.354px;color:#fff">05 - Sad But True.mp3</div>
<svg style="left:5px;top:92px" width="13" height="15" viewBox="0 0 13 15"><path d="M0.5 0.5H8L12 4.5V14.5H0.5Z" fill="#CFE5FA"/><path d="M1 1H7.5V6H1Z" fill="#E6F2FD"/><path d="M0.5 14.5V0.5H8" fill="none" stroke="#E3EFFB"/><path d="M12 4.5V14.5H1" fill="none" stroke="#7E8C9E"/><path d="M8 0.5L12 4.5H8Z" fill="#4A84CC"/><path d="M2 8.5H5V5.5H7.5V8.5H9.2" fill="none" stroke="#000" stroke-width="1.2"/></svg>
<div class="row" style="left:21.5px;top:91px;letter-spacing:0.102px">C:\music\Apocalyptica\</div><div class="row" style="left:135px;top:91px;letter-spacing:-0.286px">1995 - Plays Metallica by Four Cellos</div><div class="row" style="left:306px;top:91px;letter-spacing:0.112px">\Apocalyptica - </div><div class="row" style="left:383px;top:91px;letter-spacing:-0.354px">06 - Creeping Death.mp3</div>
<svg style="left:5px;top:110px" width="13" height="15" viewBox="0 0 13 15"><path d="M0.5 0.5H8L12 4.5V14.5H0.5Z" fill="#CFE5FA"/><path d="M1 1H7.5V6H1Z" fill="#E6F2FD"/><path d="M0.5 14.5V0.5H8" fill="none" stroke="#E3EFFB"/><path d="M12 4.5V14.5H1" fill="none" stroke="#7E8C9E"/><path d="M8 0.5L12 4.5H8Z" fill="#4A84CC"/><path d="M2 8.5H5V5.5H7.5V8.5H9.2" fill="none" stroke="#000" stroke-width="1.2"/></svg>
<div class="row" style="left:21.5px;top:109px;letter-spacing:0.102px">C:\music\Apocalyptica\</div><div class="row" style="left:135px;top:109px;letter-spacing:-0.286px">1995 - Plays Metallica by Four Cellos</div><div class="row" style="left:306px;top:109px;letter-spacing:0.112px">\Apocalyptica - </div><div class="row" style="left:383px;top:109px;letter-spacing:-0.354px">07 - Wherever I May Roam.mp3</div>
<svg style="left:5px;top:128px" width="13" height="15" viewBox="0 0 13 15"><path d="M0.5 0.5H8L12 4.5V14.5H0.5Z" fill="#CFE5FA"/><path d="M1 1H7.5V6H1Z" fill="#E6F2FD"/><path d="M0.5 14.5V0.5H8" fill="none" stroke="#E3EFFB"/><path d="M12 4.5V14.5H1" fill="none" stroke="#7E8C9E"/><path d="M8 0.5L12 4.5H8Z" fill="#4A84CC"/><path d="M2 8.5H5V5.5H7.5V8.5H9.2" fill="none" stroke="#000" stroke-width="1.2"/></svg>
<div class="row" style="left:21.5px;top:127px;letter-spacing:0.102px">C:\music\Apocalyptica\</div><div class="row" style="left:135px;top:127px;letter-spacing:-0.286px">1995 - Plays Metallica by Four Cellos</div><div class="row" style="left:306px;top:127px;letter-spacing:0.112px">\Apocalyptica - </div><div class="row" style="left:383px;top:127px;letter-spacing:-0.354px">08 - Welcome Home (Sanitarium).mp3</div>
</div>

<!-- context menu -->
<div class="abs" id="ctx" style="left:291px;top:477px;width:117px;height:66px;background:#fff;border:1px solid #ACA899;box-shadow:2px 2px 2px rgba(0,0,0,0.45)">
 <div style="left:2px;top:2px;width:111px;height:17px;background:#316AC5"></div>
 <div class="lbl" style="left:19px;top:4px;color:#fff;letter-spacing:-0.4px">Open File</div>
 <div class="lbl" style="left:82px;top:4px;color:#fff;letter-spacing:0">F5</div>
 <div style="left:3px;top:22px;width:109px;height:1px;background:#ACA899"></div>
 <div class="lbl" style="left:19px;top:30px;letter-spacing:-0.3px">Copy List</div>
 <div class="lbl" style="left:19px;top:47px;letter-spacing:-0.12px">Save List...</div>
</div>
<!-- cursor -->
<svg class="abs" style="left:297px;top:484px" width="13" height="21" viewBox="0 0 13 21"><path d="M0.5 0.5V16.5L4.5 12.5L7.5 19.5L10 18.5L7 11.5H12Z" fill="#fff" stroke="#000"/></svg>

<!-- status bar -->
<div class="abs" style="left:4px;top:575px;width:792px;height:21px;background:#ECE9D8"></div>
<div class="abs" style="left:202px;top:578px;width:1px;height:17px;background:#ACA899"></div>
<div class="abs" style="left:203px;top:578px;width:1px;height:17px;background:#fff"></div>
<div class="abs lbl" style="left:464px;top:582px;letter-spacing:0.03px">5/8&nbsp; (39.43 Mb)</div>
<svg class="abs" style="left:784px;top:584px" width="12" height="12" viewBox="0 0 12 12"><g fill="#A8A591"><rect x="8" y="0" width="2" height="2"/><rect x="4" y="4" width="2" height="2"/><rect x="8" y="4" width="2" height="2"/><rect x="0" y="8" width="2" height="2"/><rect x="4" y="8" width="2" height="2"/><rect x="8" y="8" width="2" height="2"/></g><g fill="#fff"><rect x="9" y="1" width="2" height="2"/><rect x="5" y="5" width="2" height="2"/><rect x="9" y="5" width="2" height="2"/><rect x="1" y="9" width="2" height="2"/><rect x="5" y="9" width="2" height="2"/><rect x="9" y="9" width="2" height="2"/></g></svg>

<div class="abs" id="wr" style="left:795px;top:30px;width:1px;height:566px;background:#F2F4FC"></div>
<div class="abs" id="wl" style="left:4px;top:30px;width:1px;height:566px;background:#F2F4FC"></div>
<div class="abs" id="wb" style="left:4px;top:595px;width:792px;height:1px;background:#F2F4FC"></div>

</body></html>
